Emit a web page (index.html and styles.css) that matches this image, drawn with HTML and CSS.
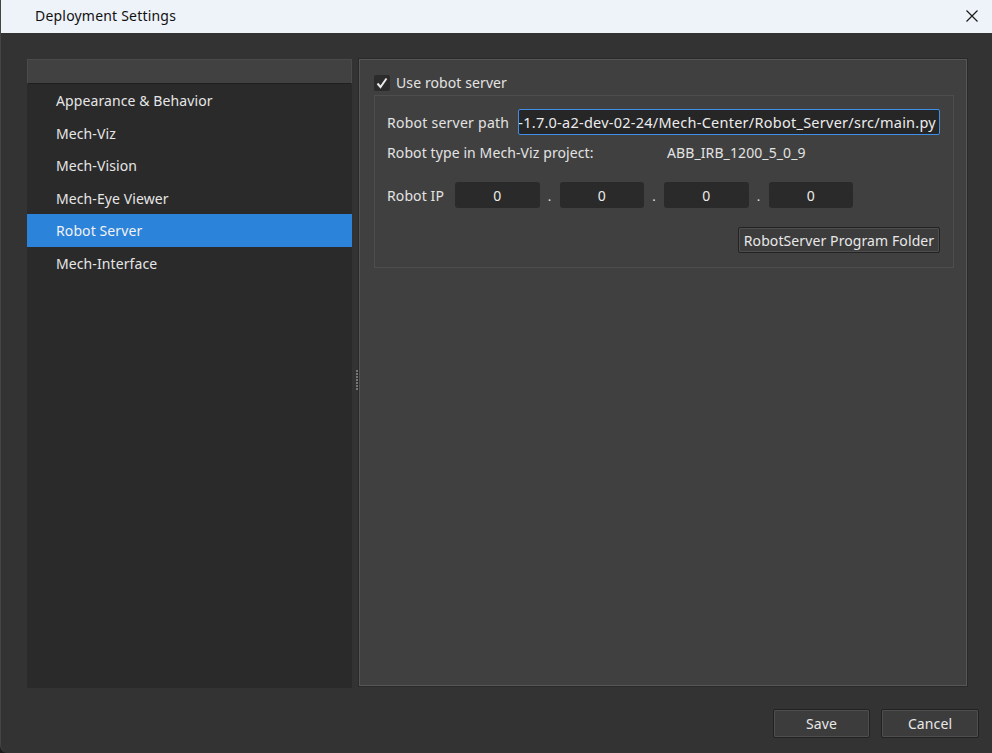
FILE: index.html
```html
<!DOCTYPE html>
<html>
<head>
<meta charset="utf-8">
<link rel="stylesheet" href="styles.css">
</head>
<body>
<div class="window">
  <div class="titlebar">
    <span class="title">Deployment Settings</span>
    <svg class="close" width="14" height="14" viewBox="0 0 14 14"><path d="M1.5 1.5 L12.5 12.5 M12.5 1.5 L1.5 12.5" stroke="#1a1a1a" stroke-width="1.2" fill="none"/></svg>
  </div>
  <div class="content">
    <div class="nav">
      <div class="nav-header"></div>
      <div class="nav-item">Appearance &amp; Behavior</div>
      <div class="nav-item">Mech-Viz</div>
      <div class="nav-item">Mech-Vision</div>
      <div class="nav-item">Mech-Eye Viewer</div>
      <div class="nav-item selected">Robot Server</div>
      <div class="nav-item">Mech-Interface</div>
    </div>
    <div class="splitter"><div class="grip"></div></div>
    <div class="page">
      <label class="check-row">
        <span class="checkbox"><svg width="12" height="12" viewBox="0 0 12 12"><path d="M1.5 6.5 L4.5 10 L10.5 1.5" stroke="#e8e8e8" stroke-width="2" fill="none"/></svg></span>
        <span>Use robot server</span>
      </label>
      <div class="group">
        <div class="row path-row">
          <span class="label path-label">Robot server path</span>
          <div class="path-input"><span>-1.7.0-a2-dev-02-24/Mech-Center/Robot_Server/src/main.py</span></div>
        </div>
        <div class="row type-row">
          <span class="label type-label">Robot type in Mech-Viz project:</span>
          <span class="value">ABB_IRB_1200_5_0_9</span>
        </div>
        <div class="row ip-row">
          <span class="label ip-label">Robot IP</span>
          <div class="ip-field">0</div><span class="dot">.</span>
          <div class="ip-field">0</div><span class="dot">.</span>
          <div class="ip-field">0</div><span class="dot">.</span>
          <div class="ip-field">0</div>
        </div>
        <div class="row btn-row">
          <button class="btn folder-btn">RobotServer Program Folder</button>
        </div>
      </div>
    </div>
  </div>
  <div class="footer">
    <button class="btn footer-btn save-btn">Save</button>
    <button class="btn footer-btn">Cancel</button>
  </div>
</div>
</body>
</html>
```
FILE: styles.css
```css
* { box-sizing: border-box; }
html, body {
  margin: 0;
  padding: 0;
  width: 992px;
  height: 753px;
  overflow: hidden;
  background: #1e1e1e;
  font-family: "Noto Sans", "Open Sans", sans-serif;
  font-size: 14px;
  letter-spacing: 0.1px;
  color: #e3e3e3;
}
.window {
  width: 992px;
  height: 753px;
  background: #333333;
  border-left: 1px solid #454545;
  border-bottom-left-radius: 8px;
  display: flex;
  flex-direction: column;
  overflow: hidden;
}
.titlebar {
  height: 33px;
  flex: none;
  background: #eef3f9;
  display: flex;
  align-items: center;
  justify-content: space-between;
  padding: 0 13px 3px 34px;
  color: #111;
  font-size: 14px;
  letter-spacing: 0.2px;
}
.close { margin-top: 2px; }
.content {
  display: flex;
  padding: 26px 25px 0 26px;
  height: 655px;
  flex: none;
}
.nav {
  width: 325px;
  height: 629px;
  background: #2a2a2a;
  flex: none;
}
.nav-header {
  height: 25px;
  background: #414141;
  border: 1px solid #4b4b4b;
  border-bottom: 1px solid #1f1f1f;
}
.nav-item {
  height: 32.5px;
  line-height: 32.5px;
  padding-left: 29px;
  padding-top: 1px;
  color: #e6e6e6;
}
.nav-item.selected {
  background: #2b83da;
  color: #f2f2f2;
}
.splitter {
  width: 7px;
  flex: none;
  display: flex;
  align-items: center;
  justify-content: center;
}
.grip {
  width: 3px;
  height: 20px;
  margin-top: 12px;
  margin-left: 4px;
  background: repeating-linear-gradient(to bottom, #777 0 2px, transparent 2px 3px);
}
.page {
  width: 608px;
  height: 627px;
  background: #404040;
  border: 1px solid #565656;
  box-shadow: 0 0 0 1px #2a2a2a;
  padding: 13px 12px 0 14px;
  flex: none;
}
.check-row {
  display: flex;
  align-items: center;
  height: 18px;
  gap: 6px;
}
.checkbox {
  width: 16px;
  height: 16px;
  background: #2b2b2b;
  border-radius: 2px;
  display: flex;
  align-items: center;
  justify-content: center;
  margin-top: 1px;
}
.group {
  margin-top: 4px;
  height: 173px;
  border: 1px solid #4d4d4d;
  padding: 13px 13px 0 12px;
}
.row {
  display: flex;
  align-items: center;
}
.path-row { height: 26px; }
.path-label { width: 131px; flex: none; letter-spacing: 0.25px; }
.path-input {
  flex: 1;
  height: 26px;
  background: #262626;
  border: 1px solid #3e8fe8;
  border-radius: 2px;
  overflow: hidden;
  white-space: nowrap;
  display: flex;
  justify-content: flex-end;
  align-items: center;
  padding-right: 3px;
  color: #ececec;
  font-size: 14.5px;
  letter-spacing: 0.25px;
}
.type-row { height: 20px; margin-top: 7px; }
.type-label { width: 280px; flex: none; }
.ip-row { height: 26px; margin-top: 20px; }
.ip-label { width: 68px; flex: none; }
.ip-field {
  width: 84.5px;
  height: 26px;
  background: #2a2a2a;
  border-radius: 3px;
  display: flex;
  align-items: center;
  justify-content: center;
  color: #ececec;
}
.dot {
  width: 20px;
  text-align: center;
  font-size: 13px;
  padding-top: 2px;
}
.btn-row { justify-content: flex-end; margin-top: 19px; }
.btn {
  font-family: inherit;
  font-size: 14px;
  letter-spacing: 0.1px;
  color: #e8e8e8;
  background: #3c3c3c;
  border: 1px solid #222;
  border-radius: 2px;
  box-shadow: inset 0 0 0 1px #4e4e4e;
  padding: 0;
  height: 26px;
}
.folder-btn { width: 202px; }
.footer {
  display: flex;
  justify-content: flex-end;
  gap: 11px;
  padding: 21px 13px 0 0;
}
.footer-btn {
  width: 98px;
  height: 29px;
}
.save-btn { width: 97px; }
```
